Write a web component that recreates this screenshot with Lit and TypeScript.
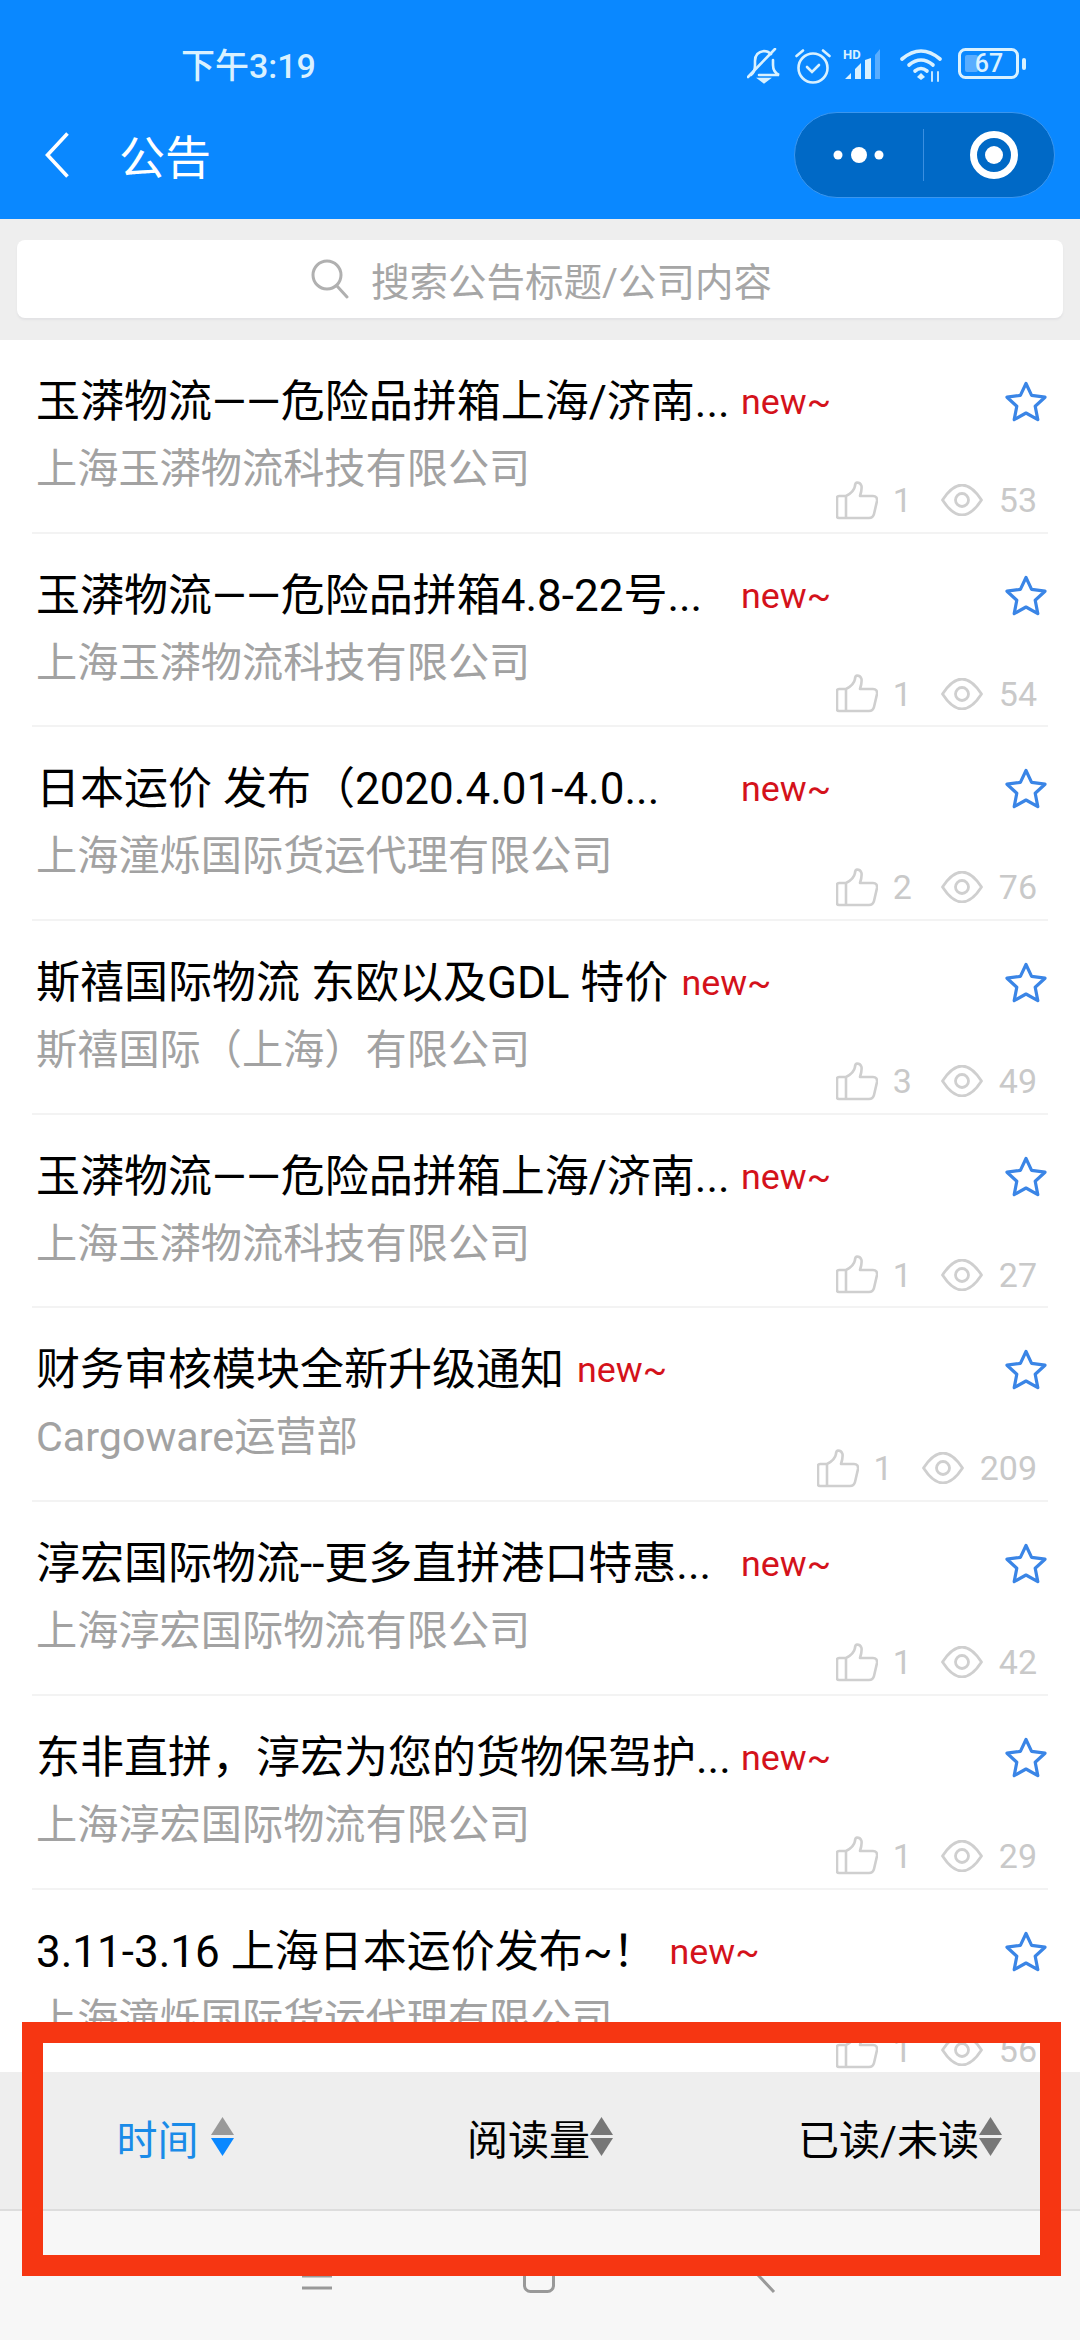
import { LitElement, html, css } from "lit";
import { customElement } from "lit/decorators.js";

type Row = { title: string; sub: string; likes: number; views: number; clip?: boolean };

const ROWS: Row[] = [
  { title: "玉漭物流——危险品拼箱上海/济南...", sub: "上海玉漭物流科技有限公司", likes: 1, views: 53, clip: true },
  { title: "玉漭物流——危险品拼箱4.8-22号...", sub: "上海玉漭物流科技有限公司", likes: 1, views: 54, clip: true },
  { title: "日本运价 发布（2020.4.01-4.0...", sub: "上海潼烁国际货运代理有限公司", likes: 2, views: 76, clip: true },
  { title: "斯禧国际物流 东欧以及GDL 特价", sub: "斯禧国际（上海）有限公司", likes: 3, views: 49 },
  { title: "玉漭物流——危险品拼箱上海/济南...", sub: "上海玉漭物流科技有限公司", likes: 1, views: 27, clip: true },
  { title: "财务审核模块全新升级通知", sub: "Cargoware运营部", likes: 1, views: 209 },
  { title: "淳宏国际物流--更多直拼港口特惠...", sub: "上海淳宏国际物流有限公司", likes: 1, views: 42, clip: true },
  { title: "东非直拼，淳宏为您的货物保驾护...", sub: "上海淳宏国际物流有限公司", likes: 1, views: 29, clip: true },
  { title: "3.11-3.16 上海日本运价发布~！", sub: "上海潼烁国际货运代理有限公司", likes: 1, views: 56 },
];

const star = html`<svg class="star" viewBox="0 0 44 42" width="44" height="42">
  <path d="M22 2.5 L27.6 14.4 L41 16.2 L31.2 25.2 L33.8 38.6 L22 32 L10.2 38.6 L12.8 25.2 L3 16.2 L16.4 14.4 Z"
    fill="none" stroke="#3a85e6" stroke-width="3.2" stroke-linejoin="round"/></svg>`;

const thumb = html`<svg viewBox="0 0 42 39" width="42" height="39">
  <path d="M10 15 H3 Q1 15 1 17 V35 Q1 37 3 37 H10 M10 15 V37 H33 Q37 37 38 33 L41 20 Q41.500 15 37 15 H24 Q26 9 25.500 5 Q24.500 1.500 21 1.500 Q19 2 19 5 Q18 11 10 15 Z"
    fill="none" stroke="#cfcfcf" stroke-width="2.600" stroke-linejoin="round"/></svg>`;

const eye = html`<svg viewBox="0 0 42 32" width="42" height="32">
  <path d="M1.500 16 Q21 -14 40.500 16 Q21 46 1.500 16 Z" fill="none" stroke="#cfcfcf" stroke-width="2.800" stroke-linejoin="round"/>
  <circle cx="21" cy="16" r="6.500" fill="none" stroke="#cfcfcf" stroke-width="2.800"/></svg>`;

const sortIcon = (up: string, down: string) => html`<svg class="sort" viewBox="0 0 23 40" width="23" height="40">
  <path d="M11.500 0 L23 18 H0 Z" fill=${up}/><path d="M0 21 H23 L11.500 39 Z" fill=${down}/></svg>`;

@customElement("app-root")
export class AppRoot extends LitElement {
  static styles = css`
    :host {
      display: block;
      position: relative;
      width: 1080px;
      height: 2340px;
      overflow: hidden;
      background: #fff;
      font-family: Roboto, "Noto Sans CJK SC", sans-serif;
    }
    .header { background: #0a88ff; height: 219px; display: flex; flex-direction: column; }
    .status {
      height: 112px; box-sizing: border-box; padding: 48px 54px 0 181px;
      display: flex; justify-content: space-between; align-items: flex-start; color: #d9f1ff;
    }
    .time { font-size: 34px; line-height: 34px; font-weight: 500; margin-top: 1px; }
    .status-icons { display: flex; align-items: flex-start; }
    .status-icons svg { display: block; }
    .nav { display: flex; align-items: center; height: 86px; padding: 0 25px 0 45px; color: #fff; }
    .page-title { font-size: 46px; line-height: 60px; margin-left: 50px; padding-top: 5px; flex: 1; }
    .capsule {
      width: 261px; height: 86px; box-sizing: border-box; border-radius: 43px;
      background: #0069c6; border: 1px solid #3b96ee;
      display: flex; align-items: center;
    }
    .capsule svg { display: block; }
    .search-wrap { background: #eee; height: 121px; box-sizing: border-box; padding: 21px 17px 0; }
    .search {
      height: 78px; box-sizing: border-box; padding-left: 3px; background: #fff; border-radius: 8px; box-shadow: 0 2px 2px #e2e2e4;
      display: flex; align-items: center; justify-content: center; gap: 22px;
      color: #a6a6a6; font-size: 38.500px;
    }
    .search svg { display: block; }
    .list { display: flex; flex-direction: column; padding: 0 32px; }
    .row {
      height: 193.700px; box-sizing: border-box; padding: 32px 0 0 4px;
      border-bottom: 2px solid #f3f3f3; display: flex; flex-direction: column;
    }
    .head { display: flex; align-items: center; height: 60px; }
    .title { font-size: 44px; line-height: 60px; color: #000; white-space: nowrap; }
    .title.clip { width: 692px; }
    .new { font-size: 35.800px; color: #d4121b; margin-left: 13px; line-height: 60px; }
    .star { margin-left: auto; display: block; }
    .foot { display: flex; justify-content: space-between; height: 88px; padding-right: 11px; }
    .sub { font-size: 41.200px; line-height: 60px; color: #a2a2a2; margin-top: 7px; white-space: nowrap; }
    .stats {
      align-self: flex-end; display: flex; align-items: center; gap: 15px;
      font-size: 34px; line-height: 40px; color: #c9c9c9;
    }
    .stats svg { display: block; }
    .stats .views-icon { margin-left: 14px; margin-right: 1px; }
    .dock { position: absolute; left: 0; right: 0; bottom: 0; }
    .sortbar {
      height: 137px; background: #eee; border-bottom: 2px solid #ddd;
      display: grid; grid-template-columns: repeat(3, 1fr);
    }
    .sort-item {
      display: flex; align-items: center; justify-content: center;
      font-size: 41px; color: #000; padding-bottom: 8px;
    }
    .sort-item.active { color: #1a8be8; gap: 12px; padding-right: 10px; }
    .sort { display: block; }
    .sysnav {
      height: 129px; background: #f7f7f7; box-sizing: border-box;
      display: flex; align-items: center; padding-left: 302px;
    }
    .sysnav svg { display: block; }
    .sysnav .square { margin-left: 191px; }
    .sysnav .back { margin-left: 201px; }
    .mark {
      position: absolute; left: 22px; top: 2022px; width: 1039px; height: 254px;
      box-sizing: border-box; border: 21px solid #f63612;
    }
  `;

  private statusIcons() {
    return html`<div class="status-icons">
      <svg width="34" height="36" viewBox="0 0 34 36" fill="none" stroke="#d9f1ff" stroke-width="2.600" stroke-linecap="round">
        <path d="M4 27 Q8 24 8 17 V13 Q8 4 17 3 Q21 3 24 6 M26 12 V17 Q26 24 32 27 H12"/>
        <path d="M1 29 L28 1"/><path d="M13 31 H21 L17 34 Z" fill="#d9f1ff"/>
      </svg>
      <svg style="margin-left:14px" width="36" height="36" viewBox="0 0 36 36" fill="none" stroke="#d9f1ff" stroke-width="2.600" stroke-linecap="round">
        <circle cx="18" cy="20" r="14.500"/>
        <path d="M12 19 L17 24 L24 17"/><path d="M1.500 8 L8 2.500 M28 2.500 L34.500 8"/>
      </svg>
      <svg style="margin-left:12px" width="42" height="34" viewBox="0 0 42 34">
        <text x="0" y="11" font-size="13" font-weight="700" fill="#d9f1ff" font-family="Roboto, sans-serif">HD</text>
        <path d="M2 31 L8 25 V31 Z M12 31 V21 L18 15 V31 Z M22 31 V12 L28 10 V31 Z" fill="#d9f1ff"/>
        <path d="M32 31 V7 L37 1 V31 Z" fill="#59adff"/>
      </svg>
      <svg style="margin-left:15px" width="44" height="34" viewBox="0 0 44 34" fill="none" stroke="#d9f1ff" stroke-width="3.600" stroke-linecap="round">
        <path d="M2 11 Q21 -5 40 11"/><path d="M9 17 Q21 7 33 17"/><path d="M15 23 Q21 18 27 23"/>
        <path d="M17 29 L21 25 L25 29 L21 32 Z" fill="#d9f1ff" stroke="none"/>
        <path d="M32 24 V33 M38 24 V33" stroke-width="1.800"/>
      </svg>
      <svg style="margin-left:14px" width="68" height="32" viewBox="0 0 68 32">
        <rect x="1.500" y="1.500" width="58" height="28" rx="6" fill="none" stroke="#d9f1ff" stroke-width="3"/>
        <rect x="7" y="7" width="13" height="17" rx="2" fill="#59adff"/>
        <rect x="64" y="10" width="4" height="12" rx="2" fill="#d9f1ff"/>
        <text x="31" y="24" text-anchor="middle" font-size="25" font-weight="500" fill="#d9f1ff" font-family="Roboto, sans-serif">67</text>
      </svg>
    </div>`;
  }

  private row(r: Row) {
    return html`<div class="row">
      <div class="head">
        <span class="title ${r.clip ? "clip" : ""}">${r.title}</span>
        <span class="new">new~</span>
        ${star}
      </div>
      <div class="foot">
        <div class="sub">${r.sub}</div>
        <div class="stats">
          ${thumb}<span>${r.likes}</span>
          <span class="views-icon">${eye}</span><span>${r.views}</span>
        </div>
      </div>
    </div>`;
  }

  render() {
    return html`
      <div class="header">
        <div class="status"><span class="time">下午3:19</span>${this.statusIcons()}</div>
        <div class="nav">
          <svg width="24" height="46" viewBox="0 0 24 46" fill="none" stroke="#fff" stroke-width="3.600">
            <path d="M22.500 1.500 L2.500 23 L22.500 44.500"/>
          </svg>
          <span class="page-title">公告</span>
          <div class="capsule">
            <svg width="129" height="52" viewBox="0 0 129 52">
              <circle cx="43" cy="26" r="4.500" fill="#fff"/><circle cx="64" cy="26" r="8" fill="#fff"/><circle cx="84" cy="26" r="4.500" fill="#fff"/>
              <path d="M128.500 0 V52" stroke="#3b8fe0" stroke-width="1"/>
            </svg>
            <svg width="129" height="52" viewBox="0 0 129 52">
              <circle cx="70" cy="26" r="20.500" fill="none" stroke="#fff" stroke-width="7"/><circle cx="70" cy="26" r="9" fill="#fff"/>
            </svg>
          </div>
        </div>
      </div>
      <div class="search-wrap">
        <div class="search">
          <svg width="38" height="40" viewBox="0 0 38 40" fill="none" stroke="#b0b0b0" stroke-width="3" stroke-linecap="round">
            <circle cx="16" cy="16" r="14"/><path d="M26 27 L36 38"/>
          </svg>
          <span>搜索公告标题/公司内容</span>
        </div>
      </div>
      <div class="list">${ROWS.map((r) => this.row(r))}</div>
      <div class="dock">
        <div class="sortbar">
          <div class="sort-item active"><span>时间</span>${sortIcon("#999", "#0a88ff")}</div>
          <div class="sort-item"><span>阅读量</span>${sortIcon("#777", "#777")}</div>
          <div class="sort-item"><span>已读/未读</span>${sortIcon("#777", "#777")}</div>
        </div>
        <div class="sysnav">
          <svg width="30" height="30" viewBox="0 0 30 30" stroke="#999" stroke-width="3"><path d="M0 3 H30 M0 15 H30 M0 27 H30"/></svg>
          <svg class="square" width="32" height="34" viewBox="0 0 32 34" fill="none" stroke="#999" stroke-width="3"><rect x="1.500" y="1.500" width="29" height="31" rx="6"/></svg>
          <svg class="back" width="20" height="36" viewBox="0 0 20 36" fill="none" stroke="#999" stroke-width="3"><path d="M18 2 L3 18 L18 34"/></svg>
        </div>
      </div>
      <div class="mark"></div>
    `;
  }
}
